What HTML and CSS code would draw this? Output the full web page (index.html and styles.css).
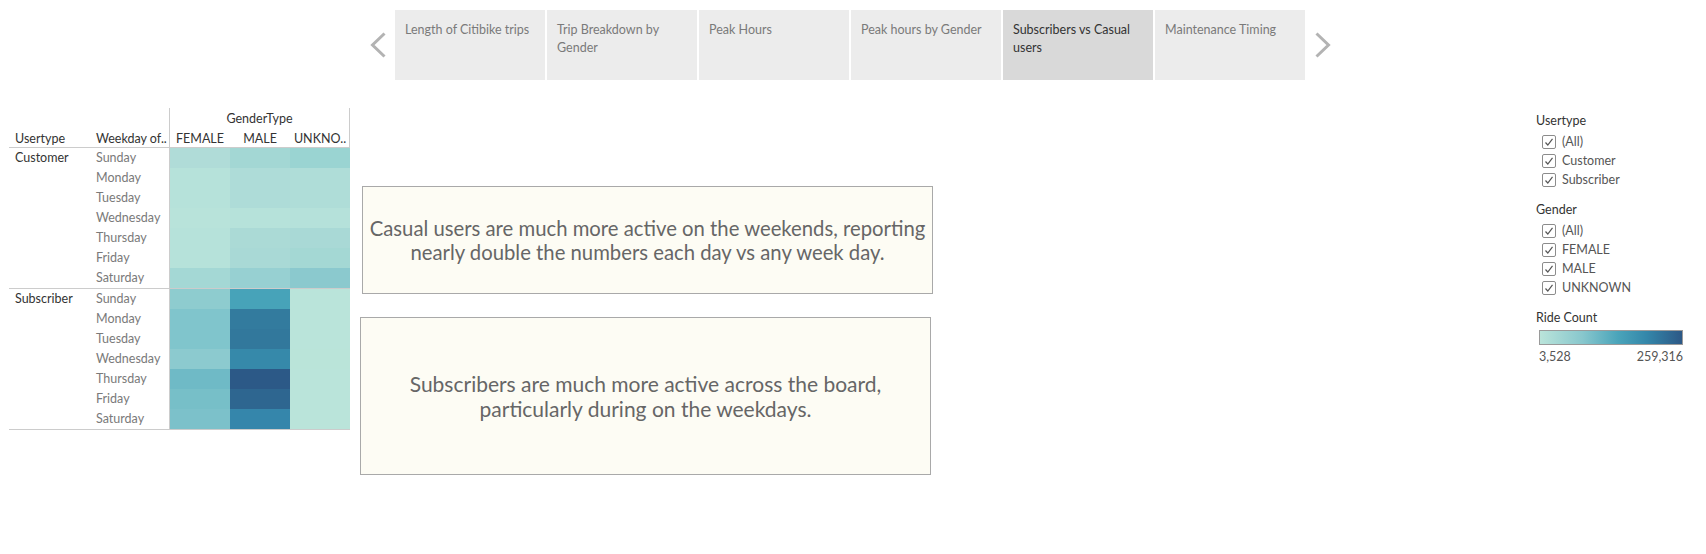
FILE: index.html
```html
<!DOCTYPE html>
<html lang="en">
<head>
<meta charset="utf-8">
<title>Subscribers vs Casual users</title>
<link rel="stylesheet" href="styles.css">
</head>
<body>
<nav class="story-nav">
  <svg class="chev" width="16" height="26" viewBox="0 0 16 26"><polyline points="14.5,1.5 2.5,13 14.5,24.5" fill="none" stroke="#b3b3b3" stroke-width="3"/></svg>
  <div class="tabs">
    <div class="tab">Length of Citibike trips</div>
    <div class="tab">Trip Breakdown by Gender</div>
    <div class="tab">Peak Hours</div>
    <div class="tab">Peak hours by Gender</div>
    <div class="tab active">Subscribers vs Casual users</div>
    <div class="tab">Maintenance Timing</div>
  </div>
  <svg class="chev chev-right" width="16" height="26" viewBox="0 0 16 26"><polyline points="1.5,1.5 13.5,13 1.5,24.5" fill="none" stroke="#b3b3b3" stroke-width="3"/></svg>
</nav>

<main class="dash">
  <section class="xt">
    <div class="xt-head">
      <div class="rh-labels">
        <div class="rh-ut">Usertype</div>
        <div class="rh-day">Weekday of..</div>
      </div>
      <div class="ch">
        <div class="ch-title">GenderType</div>
        <div class="ch-cols"><span>FEMALE</span><span>MALE</span><span>UNKNO..</span></div>
      </div>
    </div>

    <div class="xt-group">
      <div class="g-ut">Customer</div>
      <div class="g-days"><div>Sunday</div><div>Monday</div><div>Tuesday</div><div>Wednesday</div><div>Thursday</div><div>Friday</div><div>Saturday</div></div>
      <div class="g-cells">
        <div style="background:#b0dcd8"></div><div style="background:#a3d7d4"></div><div style="background:#9ad4d2"></div>
        <div style="background:#b6e2da"></div><div style="background:#aedcd8"></div><div style="background:#afddd8"></div>
        <div style="background:#b6e2da"></div><div style="background:#aedcd8"></div><div style="background:#afddd8"></div>
        <div style="background:#b8e3da"></div><div style="background:#b6e2da"></div><div style="background:#b5e1da"></div>
        <div style="background:#b6e2da"></div><div style="background:#abdad6"></div><div style="background:#a9d9d6"></div>
        <div style="background:#b6e2da"></div><div style="background:#a9d9d6"></div><div style="background:#a4d8d4"></div>
        <div style="background:#a4d8d5"></div><div style="background:#97d0d2"></div><div style="background:#8bc9ce"></div>
      </div>
    </div>

    <div class="xt-group">
      <div class="g-ut">Subscriber</div>
      <div class="g-days"><div>Sunday</div><div>Monday</div><div>Tuesday</div><div>Wednesday</div><div>Thursday</div><div>Friday</div><div>Saturday</div></div>
      <div class="g-cells">
        <div style="background:#8ecccf"></div><div style="background:#47a3b9"></div><div style="background:#bae4da"></div>
        <div style="background:#80c5cc"></div><div style="background:#337b9e"></div><div style="background:#bae4da"></div>
        <div style="background:#80c5cc"></div><div style="background:#32789c"></div><div style="background:#bae4da"></div>
        <div style="background:#8ccacf"></div><div style="background:#3689aa"></div><div style="background:#bae4d9"></div>
        <div style="background:#6fbac6"></div><div style="background:#2c5987"></div><div style="background:#bae4da"></div>
        <div style="background:#77bfc8"></div><div style="background:#2e6690"></div><div style="background:#bae4da"></div>
        <div style="background:#7cc1ca"></div><div style="background:#3586ab"></div><div style="background:#bae4da"></div>
      </div>
    </div>
  </section>

  <section class="notes">
    <div class="note note-1">Casual users are much more active on the weekends, reporting<br>nearly double the numbers each day vs any week day.</div>
    <div class="note note-2">Subscribers are much more active across the board,<br>particularly during on the weekdays.</div>
  </section>

  <aside class="legend">
    <div class="lg-title">Usertype</div>
    <div class="lg-row"><svg class="cb" width="14" height="14" viewBox="0 0 14 14"><rect x="0.5" y="0.5" width="13" height="13" rx="1.5" fill="#fff" stroke="#8c8c8c"/><polyline points="3.5,7.5 5.8,10 10.5,3.8" fill="none" stroke="#555" stroke-width="1.2"/></svg><span>(All)</span></div>
    <div class="lg-row"><svg class="cb" width="14" height="14" viewBox="0 0 14 14"><rect x="0.5" y="0.5" width="13" height="13" rx="1.5" fill="#fff" stroke="#8c8c8c"/><polyline points="3.5,7.5 5.8,10 10.5,3.8" fill="none" stroke="#555" stroke-width="1.2"/></svg><span>Customer</span></div>
    <div class="lg-row"><svg class="cb" width="14" height="14" viewBox="0 0 14 14"><rect x="0.5" y="0.5" width="13" height="13" rx="1.5" fill="#fff" stroke="#8c8c8c"/><polyline points="3.5,7.5 5.8,10 10.5,3.8" fill="none" stroke="#555" stroke-width="1.2"/></svg><span>Subscriber</span></div>

    <div class="lg-title lg-gap">Gender</div>
    <div class="lg-row"><svg class="cb" width="14" height="14" viewBox="0 0 14 14"><rect x="0.5" y="0.5" width="13" height="13" rx="1.5" fill="#fff" stroke="#8c8c8c"/><polyline points="3.5,7.5 5.8,10 10.5,3.8" fill="none" stroke="#555" stroke-width="1.2"/></svg><span>(All)</span></div>
    <div class="lg-row"><svg class="cb" width="14" height="14" viewBox="0 0 14 14"><rect x="0.5" y="0.5" width="13" height="13" rx="1.5" fill="#fff" stroke="#8c8c8c"/><polyline points="3.5,7.5 5.8,10 10.5,3.8" fill="none" stroke="#555" stroke-width="1.2"/></svg><span>FEMALE</span></div>
    <div class="lg-row"><svg class="cb" width="14" height="14" viewBox="0 0 14 14"><rect x="0.5" y="0.5" width="13" height="13" rx="1.5" fill="#fff" stroke="#8c8c8c"/><polyline points="3.5,7.5 5.8,10 10.5,3.8" fill="none" stroke="#555" stroke-width="1.2"/></svg><span>MALE</span></div>
    <div class="lg-row"><svg class="cb" width="14" height="14" viewBox="0 0 14 14"><rect x="0.5" y="0.5" width="13" height="13" rx="1.5" fill="#fff" stroke="#8c8c8c"/><polyline points="3.5,7.5 5.8,10 10.5,3.8" fill="none" stroke="#555" stroke-width="1.2"/></svg><span>UNKNOWN</span></div>

    <div class="lg-title lg-gap">Ride Count</div>
    <div class="ramp"></div>
    <div class="ramp-labels"><span>3,528</span><span>259,316</span></div>
  </aside>
</main>
</body>
</html>
```

FILE: styles.css
```css
* { box-sizing: border-box; }

body {
  margin: 0;
  background: #fff;
  font-family: Lato, "Liberation Sans", Arial, sans-serif;
  font-size: 12.5px;
  color: #333;
}

/* story navigation */
.story-nav {
  display: flex;
  align-items: center;
  padding: 10px 0 0 370px;
  height: 80px;
}
.chev { flex: none; margin-right: 9px; }
.chev-right { margin: 0 0 0 10px; }
.tabs { display: flex; gap: 2px; }
.tab {
  width: 150px;
  height: 70px;
  background: #ececec;
  color: #7a7a7a;
  padding: 11px 10px 0 10px;
  line-height: 18px;
  font-size: 12.5px;
}
.tab.active { background: #d9d9d9; color: #333; }

/* dashboard */
.dash {
  display: flex;
  align-items: flex-start;
  padding-top: 28px;
}

/* crosstab */
.xt { margin-left: 9px; width: 341px; flex: none; }
.xt-head { display: flex; height: 40px; border-bottom: 1px solid #ccc; }
.rh-labels { width: 160px; display: flex; align-items: flex-end; }
.rh-ut { width: 81px; padding-left: 6px; line-height: 17px; }
.rh-day { width: 79px; padding-left: 6px; line-height: 17px; white-space: nowrap; }
.ch { width: 181px; border-left: 1px solid #ccc; border-right: 1px solid #ccc; }
.ch-title { text-align: center; height: 22px; line-height: 22px; }
.ch-cols { display: grid; grid-template-columns: repeat(3, 60px); line-height: 17px; }
.ch-cols span { text-align: center; }

.xt-group { display: flex; border-bottom: 1px solid #ccc; }
.g-ut { width: 81px; padding-left: 6px; line-height: 20px; }
.g-days { width: 79px; padding-left: 6px; color: #7a7a7a; }
.g-days div { height: 20px; line-height: 20px; }
.g-cells {
  width: 181px;
  display: grid;
  grid-template-columns: repeat(3, 60px);
  grid-auto-rows: 20px;
  border-left: 1px solid #ccc;
  border-right: 1px solid #ccc;
}

/* text boxes */
.notes { margin-left: 10px; margin-top: 78px; flex: none; display: flex; flex-direction: column; }
.note {
  background: #fdfcf4;
  border: 1px solid #a9a9a9;
  color: #666;
  text-align: center;
  display: flex;
  align-items: center;
  justify-content: center;
  white-space: nowrap;
}
.note-1 { width: 571px; height: 108px; margin-left: 2px; font-size: 20.3px; line-height: 24px; }
.note-2 { width: 571px; height: 158px; margin-top: 23px; font-size: 21px; line-height: 25px; }

/* legend */
.legend { margin-left: auto; margin-right: 20px; width: 150px; margin-top: 5px; flex: none; }
.lg-title { line-height: 16px; color: #333; margin-bottom: 3px; }
.lg-gap { margin-top: 13px; }
.lg-row { display: flex; align-items: center; height: 19px; padding-left: 6px; color: #555; }
.cb { flex: none; margin-right: 6px; }
.ramp {
  margin: 4px 0 0 3px;
  width: 144px;
  height: 15px;
  border: 1px solid #9a9a9a;
  background: linear-gradient(to right, #bae4da 0%, #88c7cd 30%, #4aa4ba 55%, #3487aa 75%, #2c5886 100%);
}
.ramp-labels { display: flex; justify-content: space-between; margin: 4px 0 0 3px; width: 144px; line-height: 16px; color: #555; }
```
